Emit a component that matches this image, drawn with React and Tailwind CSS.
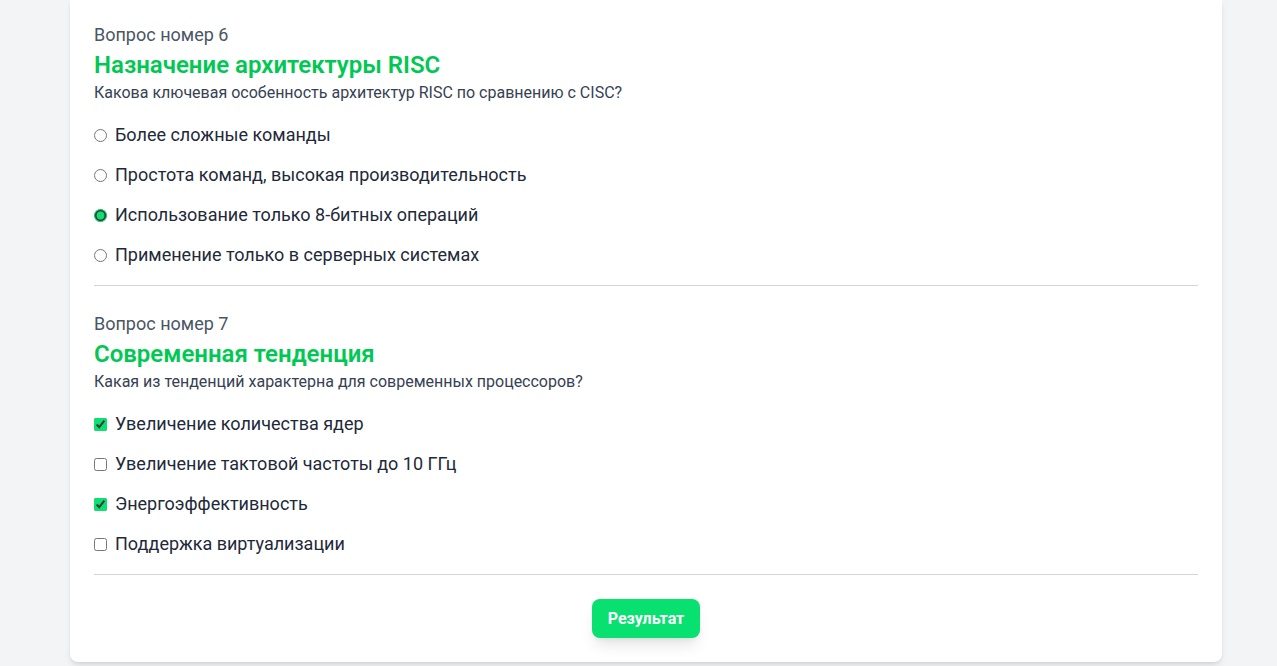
import React from "react";

const questions = [
  {
    num: 6,
    title: "Назначение архитектуры RISC",
    text: "Какова ключевая особенность архитектур RISC по сравнению с CISC?",
    type: "radio",
    options: [
      { label: "Более сложные команды", checked: false },
      { label: "Простота команд, высокая производительность", checked: false },
      { label: "Использование только 8-битных операций", checked: true },
      { label: "Применение только в серверных системах", checked: false },
    ],
  },
  {
    num: 7,
    title: "Современная тенденция",
    text: "Какая из тенденций характерна для современных процессоров?",
    type: "checkbox",
    options: [
      { label: "Увеличение количества ядер", checked: true },
      { label: "Увеличение тактовой частоты до 10 ГГц", checked: false },
      { label: "Энергоэффективность", checked: true },
      { label: "Поддержка виртуализации", checked: false },
    ],
  },
];

const Question = ({ q }) => {
  return (
    <div className="border-b border-gray-300 pb-4 mb-6">
      <p className="text-lg leading-7 text-gray-600">Вопрос номер {q.num}</p>
      <h2 className="text-2xl leading-8 font-semibold text-[#00c853]">{q.title}</h2>
      <p className="text-base leading-6 text-gray-700">{q.text}</p>
      <div className="mt-4 flex flex-col gap-3">
        {q.options.map((o, i) => (
          <label key={i} className="flex items-center gap-2 h-7 text-lg text-gray-800">
            <input
              type={q.type}
              name={"q" + q.num}
              defaultChecked={o.checked}
              className="accent-[#0be070] w-[13px] h-[13px]"
            />
            {o.label}
          </label>
        ))}
      </div>
    </div>
  );
};

export default function App() {
  return (
    <div className="min-h-screen bg-gray-100 pl-[70px] pb-1 font-['Roboto',sans-serif]">
      <div className="w-[1152px] bg-white rounded-b-lg shadow-md px-6 pt-[21px] pb-6">
        {questions.map((q) => (
          <Question key={q.num} q={q} />
        ))}
        <div className="flex justify-center">
          <button className="bg-[#08e070] text-white font-bold text-base px-4 h-[39px] rounded-lg shadow-lg">
            Результат
          </button>
        </div>
      </div>
    </div>
  );
}
